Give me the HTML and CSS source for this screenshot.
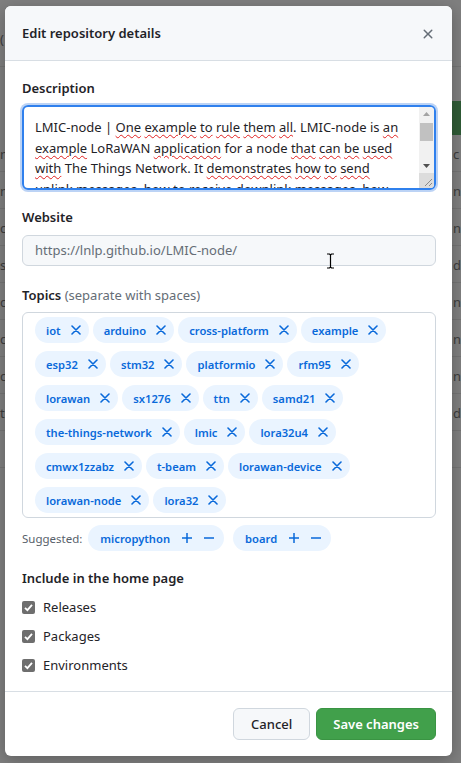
FILE: index.html
```html
<!DOCTYPE html>
<html>
<head>
  <title>Edit repository details</title>
  <link rel="stylesheet" href="styles.css">
</head>
<body>

  <div class="page">
    <div class="page-top"><span class="frag">(</span></div>
    <div class="page-green"></div>
    <div class="page-row"><span class="frag">n</span><span class="frag-r">c</span></div>
    <div class="page-row"><span class="frag">n</span><span class="frag-r">n</span></div>
    <div class="page-row"><span class="frag">c</span><span class="frag-r">n</span></div>
    <div class="page-row"><span class="frag">s</span><span class="frag-r">d</span></div>
    <div class="page-row"><span class="frag">c</span><span class="frag-r">n</span></div>
    <div class="page-row"><span class="frag">c</span><span class="frag-r">n</span></div>
    <div class="page-row"><span class="frag">c</span><span class="frag-r">n</span></div>
    <div class="page-row"><span class="frag">t</span><span class="frag-r">d</span></div>
    <div class="page-row"></div>
  </div>

  <div class="dialog">
    <div class="dialog-header">
      <h2 class="dialog-title">Edit repository details</h2>
      <svg class="close-icon" width="16" height="16" viewBox="0 0 16 16"><path d="M3.72 3.72a.75.75 0 0 1 1.06 0L8 6.94l3.22-3.22a.75.75 0 1 1 1.06 1.06L9.06 8l3.22 3.22a.75.75 0 1 1-1.06 1.06L8 9.06l-3.22 3.22a.75.75 0 0 1-1.06-1.06L6.94 8 3.720 4.78a.75.75 0 0 1 0-1.06Z" fill="#656d76"/></svg>
    </div>

    <div class="dialog-body">
      <label class="field-label">Description</label>
      <div class="textarea">
        <div class="ta-text">
          <div class="ta-line">LMIC-node | <u>One</u> <u>example</u> <u>to</u> <u>rule</u> <u>them</u> <u>all</u>. LMIC-node is <u>an</u></div>
          <div class="ta-line"><u>example</u> LoRaWAN <u>application</u> for a node <u>that</u> <u>can</u> <u>be</u> <u>used</u></div>
          <div class="ta-line"><u>with</u> The Things Network. It <u>demonstrates</u> <u>how</u> <u>to</u> <u>send</u></div>
          <div class="ta-line"><u>uplink</u> <u>messages</u>, <u>how</u> <u>to</u> <u>receive</u> <u>downlink</u> <u>messages</u>, <u>how</u></div>
        </div>
        <div class="scrollbar">
          <div class="sb-track">
            <svg class="sb-arrow" width="15" height="14" viewBox="0 0 15 14"><path d="M4 9 L7.5 5 L11 9 Z" fill="#a3a3a3"/></svg>
            <div class="sb-thumb"></div>
            <div class="sb-space"></div>
            <svg class="sb-arrow" width="15" height="14" viewBox="0 0 15 14"><path d="M4 5 L7.5 9 L11 5 Z" fill="#505050"/></svg>
          </div>
          <div class="sb-corner">
            <svg width="15" height="15" viewBox="0 0 15 15"><path d="M13 6 L6 13 M13 10 L10 13" stroke="#8a8a8a" stroke-width="1"/></svg>
          </div>
        </div>
      </div>

      <label class="field-label website-label">Website</label>
      <div class="input">https://lnlp.github.io/LMIC-node/</div>

      <label class="field-label topics-label">Topics <span class="hint">(separate with spaces)</span></label>
      <div class="topics-box">
        <span class="tag">iot<svg class="x" viewBox="0 0 10 10"><path d="M1 1L9 9M9 1L1 9"/></svg></span>
        <span class="tag">arduino<svg class="x" viewBox="0 0 10 10"><path d="M1 1L9 9M9 1L1 9"/></svg></span>
        <span class="tag">cross-platform<svg class="x" viewBox="0 0 10 10"><path d="M1 1L9 9M9 1L1 9"/></svg></span>
        <span class="tag">example<svg class="x" viewBox="0 0 10 10"><path d="M1 1L9 9M9 1L1 9"/></svg></span>
        <span class="tag">esp32<svg class="x" viewBox="0 0 10 10"><path d="M1 1L9 9M9 1L1 9"/></svg></span>
        <span class="tag">stm32<svg class="x" viewBox="0 0 10 10"><path d="M1 1L9 9M9 1L1 9"/></svg></span>
        <span class="tag">platformio<svg class="x" viewBox="0 0 10 10"><path d="M1 1L9 9M9 1L1 9"/></svg></span>
        <span class="tag">rfm95<svg class="x" viewBox="0 0 10 10"><path d="M1 1L9 9M9 1L1 9"/></svg></span>
        <span class="tag">lorawan<svg class="x" viewBox="0 0 10 10"><path d="M1 1L9 9M9 1L1 9"/></svg></span>
        <span class="tag">sx1276<svg class="x" viewBox="0 0 10 10"><path d="M1 1L9 9M9 1L1 9"/></svg></span>
        <span class="tag">ttn<svg class="x" viewBox="0 0 10 10"><path d="M1 1L9 9M9 1L1 9"/></svg></span>
        <span class="tag">samd21<svg class="x" viewBox="0 0 10 10"><path d="M1 1L9 9M9 1L1 9"/></svg></span>
        <span class="tag">the-things-network<svg class="x" viewBox="0 0 10 10"><path d="M1 1L9 9M9 1L1 9"/></svg></span>
        <span class="tag">lmic<svg class="x" viewBox="0 0 10 10"><path d="M1 1L9 9M9 1L1 9"/></svg></span>
        <span class="tag">lora32u4<svg class="x" viewBox="0 0 10 10"><path d="M1 1L9 9M9 1L1 9"/></svg></span>
        <span class="tag">cmwx1zzabz<svg class="x" viewBox="0 0 10 10"><path d="M1 1L9 9M9 1L1 9"/></svg></span>
        <span class="tag">t-beam<svg class="x" viewBox="0 0 10 10"><path d="M1 1L9 9M9 1L1 9"/></svg></span>
        <span class="tag">lorawan-device<svg class="x" viewBox="0 0 10 10"><path d="M1 1L9 9M9 1L1 9"/></svg></span>
        <span class="tag">lorawan-node<svg class="x" viewBox="0 0 10 10"><path d="M1 1L9 9M9 1L1 9"/></svg></span>
        <span class="tag">lora32<svg class="x" viewBox="0 0 10 10"><path d="M1 1L9 9M9 1L1 9"/></svg></span>
      </div>

      <div class="suggested">
        <span class="suggested-label">Suggested:</span>
        <span class="tag tag-suggest">micropython<svg class="pm" viewBox="0 0 10 10"><path d="M0 5H10M5 0V10"/></svg><svg class="pm" viewBox="0 0 10 10"><path d="M0 5H10"/></svg></span>
        <span class="tag tag-suggest">board<svg class="pm" viewBox="0 0 10 10"><path d="M0 5H10M5 0V10"/></svg><svg class="pm" viewBox="0 0 10 10"><path d="M0 5H10"/></svg></span>
      </div>

      <label class="field-label home-label">Include in the home page</label>
      <div class="check-row"><span class="checkbox"><svg viewBox="0 0 13 13"><path d="M3 6.8L5.4 9.2L10 3.8"/></svg></span>Releases</div>
      <div class="check-row"><span class="checkbox"><svg viewBox="0 0 13 13"><path d="M3 6.8L5.4 9.2L10 3.8"/></svg></span>Packages</div>
      <div class="check-row"><span class="checkbox"><svg viewBox="0 0 13 13"><path d="M3 6.8L5.4 9.2L10 3.8"/></svg></span>Environments</div>
    </div>

    <div class="dialog-footer">
      <button class="btn">Cancel</button>
      <button class="btn btn-primary">Save changes</button>
    </div>

    <svg class="ibeam" width="9" height="16" viewBox="0 0 9 16"><path d="M1 1h2.5l1 1 1-1H8 M4.5 2v12 M1 15h2.5l1-1 1 1H8" stroke="#000" stroke-width="1.2" fill="none"/></svg>
  </div>

</body>
</html>
```

FILE: styles.css
```css
body {
  margin: 0;
  background: #7f7f7f;
  font-family: 'Noto Sans', sans-serif;
  color: #1f2328;
  position: relative;
  height: 763px;
  overflow: hidden;
}
.page {
  width: 461px;
}
.page-top {
  height: 66px;
  border-bottom: 1px solid #747474;
  position: relative;
}
.page-green {
  height: 34px;
  margin: 34px 0 0 440px;
  background: #2f5b36;
}
.page-row {
  height: 36px;
  border-bottom: 1px solid #747474;
  position: relative;
}
.frag, .frag-r {
  position: absolute;
  top: 10px;
  font-size: 13px;
  color: #3d3d3d;
}
.frag { left: 0; }
.frag-r { left: 453px; }
.page-top .frag { top: 30px; left: 0; }

.dialog {
  position: absolute;
  top: 6px;
  left: 5px;
  width: 447px;
  height: 750px;
  background: #fff;
  border-radius: 6px;
  box-shadow: 0 4px 16px rgba(0,0,0,0.25);
  overflow: hidden;
  display: flex;
  flex-direction: column;
}
.dialog-header {
  height: 54px;
  background: #f6f8fa;
  border-bottom: 1px solid #d8dee4;
  display: flex;
  align-items: center;
  justify-content: space-between;
  padding: 0 16px 0 17px;
}
.dialog-title {
  margin: 0;
  font-size: 13px;
  font-weight: 600;
}
.close-icon {
  margin-top: 1px;
}

.dialog-body {
  padding: 17px 16px 16px 17px;
  display: flex;
  flex-direction: column;
}
.field-label {
  font-size: 13px;
  font-weight: 600;
  line-height: 20px;
}
.website-label { margin-top: 17px; }
.topics-label { margin-top: 19px; }
.home-label { margin-top: 17px; }
.hint {
  font-weight: 400;
  color: #656d76;
}

.textarea {
  margin-top: 7px;
  height: 81px;
  border: 2px solid #2f80ed;
  border-radius: 6px;
  box-shadow: 0 0 0 2px #bcd3f5;
  display: flex;
  overflow: hidden;
}
.ta-text {
  flex: 1;
  padding: 10px 0 0 11px;
  font-size: 13px;
  line-height: 20.5px;
  white-space: nowrap;
  overflow: hidden;
}
.ta-text u {
  text-decoration: underline wavy #e02020;
  text-decoration-thickness: 1px;
  text-underline-offset: 2px;
}
.scrollbar {
  width: 15px;
  display: flex;
  flex-direction: column;
  background: #f1f1f1;
}
.sb-track {
  flex: 1;
  display: flex;
  flex-direction: column;
}
.sb-arrow { display: block; }
.sb-thumb {
  height: 18px;
  margin: 2px 1px 0;
  background: #c1c1c1;
}
.sb-space { flex: 1; }
.sb-corner {
  height: 15px;
  background: #dcdcdc;
}
.sb-corner svg { display: block; }

.input {
  margin-top: 8px;
  height: 29px;
  border: 1px solid #d0d7de;
  border-radius: 6px;
  background: #f6f8fa;
  padding: 0 12px;
  font-size: 13px;
  line-height: 29px;
  color: #656d76;
}

.topics-box {
  margin-top: 7px;
  border: 1px solid #d0d7de;
  border-radius: 6px;
  padding: 4px 12px 4px 12px;
  display: flex;
  flex-wrap: wrap;
  gap: 8px 4px;
}
.tag {
  height: 26px;
  display: inline-flex;
  align-items: center;
  padding: 0 8px 0 11px;
  border-radius: 13px;
  background: #eaf4ff;
  color: #0969da;
  font-size: 11.2px;
  font-weight: 600;
}
.tag svg {
  width: 10px;
  height: 10px;
  fill: none;
  stroke: #0969da;
  stroke-width: 1.6;
  stroke-linecap: round;
}
.tag .x {
  margin-left: 10px;
}

.suggested {
  margin-top: 7px;
  display: flex;
  align-items: center;
  gap: 9px;
}
.suggested-label {
  font-size: 11.5px;
  color: #57606a;
  margin-right: -3px;
}
.tag-suggest {
  padding: 0 10px 0 12px;
}
.tag-suggest .pm {
  margin-left: 12px;
  stroke-width: 1.5;
  stroke-linecap: butt;
}

.check-row {
  display: flex;
  align-items: center;
  font-size: 13px;
  line-height: 20px;
  margin-top: 9px;
}
.checkbox {
  width: 13px;
  height: 13px;
  border-radius: 2px;
  background: #6e6e6e;
  margin-right: 8px;
}
.checkbox svg {
  display: block;
  width: 13px;
  height: 13px;
  fill: none;
  stroke: #fff;
  stroke-width: 1.8;
}

.dialog-footer {
  margin-top: auto;
  border-top: 1px solid #d8dee4;
  padding: 16px 16px 16px 17px;
  display: flex;
  justify-content: flex-end;
  gap: 6px;
}
.btn {
  height: 32px;
  padding: 0 17px;
  border: 1px solid #d0d7de;
  border-radius: 6px;
  background: #f6f8fa;
  color: #1f2328;
  font-family: 'Noto Sans', sans-serif;
  font-size: 13px;
  font-weight: 500;
}
.btn-primary {
  padding: 0 16px;
  background: #41a04b;
  border-color: #3a9443;
  color: #fff;
  font-weight: 600;
}

.ibeam {
  position: absolute;
  left: 321px;
  top: 247px;
}
```
